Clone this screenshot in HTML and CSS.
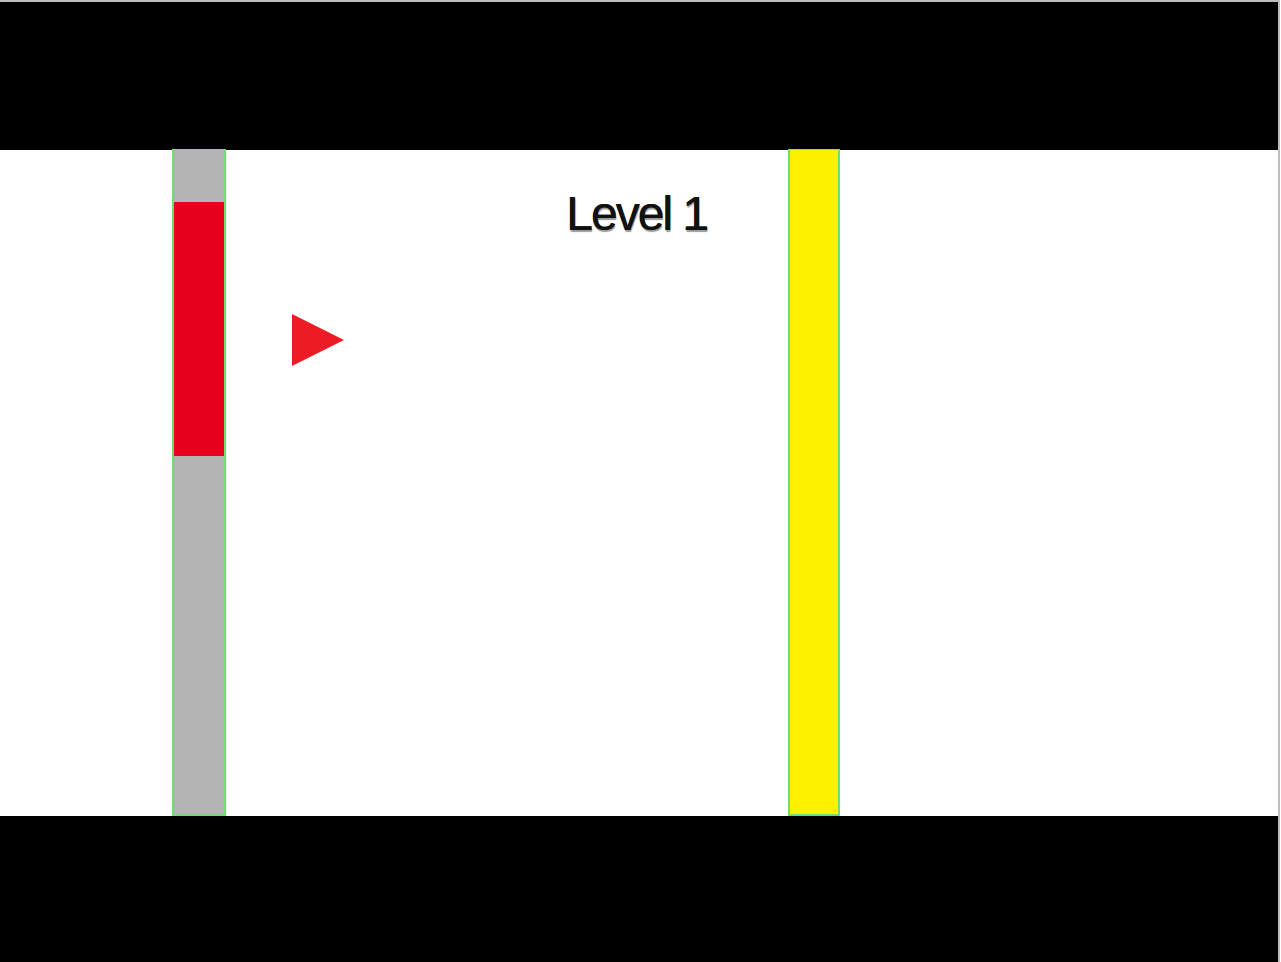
FILE: index.html
```html
<!DOCTYPE html>
<html lang="en">
<head>
    <meta charset="UTF-8">
    <meta name="viewport" content="width=device-width, initial-scale=1.0">
    <title>Level 1</title>
    <link rel="stylesheet" href="styles.css">
</head>
<body>
    <div class="frame">
        <div class="band"></div>
        <div class="stage">
            <div class="bar bar-left">
                <div class="health"></div>
            </div>
            <div class="player">
                <svg width="52" height="52" viewBox="0 0 52 52">
                    <polygon points="0,0 52,26 0,52" fill="#ed1c24"/>
                </svg>
            </div>
            <div class="level">Level 1</div>
            <div class="bar bar-goal"></div>
        </div>
        <div class="band band-bottom"></div>
    </div>
</body>
</html>
```

FILE: styles.css
```css
body {
    margin: 0;
    background-color: #ffffff;
    font-family: "Liberation Sans", Arial, sans-serif;
}

.frame {
    width: 1278px;
    height: 960px;
    border-top: 2px solid #bdbdbd;
    border-right: 2px solid #bdbdbd;
    display: flex;
    flex-direction: column;
}

.band {
    height: 148px;
    background-color: #000;
}

.band-bottom {
    height: 146px;
}

.stage {
    position: relative;
    height: 666px;
    background-color: #fff;
}

.bar {
    position: absolute;
    top: -1px;
    height: 667px;
    box-sizing: border-box;
    border: 2px solid #72dc72;
    border-top-width: 1px;
}

.bar-left {
    left: 172px;
    width: 54px;
    background-color: #b4b4b4;
}

.health {
    margin-top: 52px;
    height: 254px;
    background-color: #e6001e;
}

.bar-goal {
    left: 788px;
    width: 52px;
    background-color: #fff200;
}

.player {
    position: absolute;
    left: 292px;
    top: 164px;
    width: 52px;
    height: 52px;
}

.player svg {
    display: block;
}

.level {
    position: absolute;
    left: 566px;
    top: 40px;
    font-size: 48px;
    line-height: 48px;
    letter-spacing: -2px;
    color: #111;
    text-shadow: 0.6px 0 0 #111, 1px 2px 1px rgba(0, 0, 0, 0.4);
}
```
